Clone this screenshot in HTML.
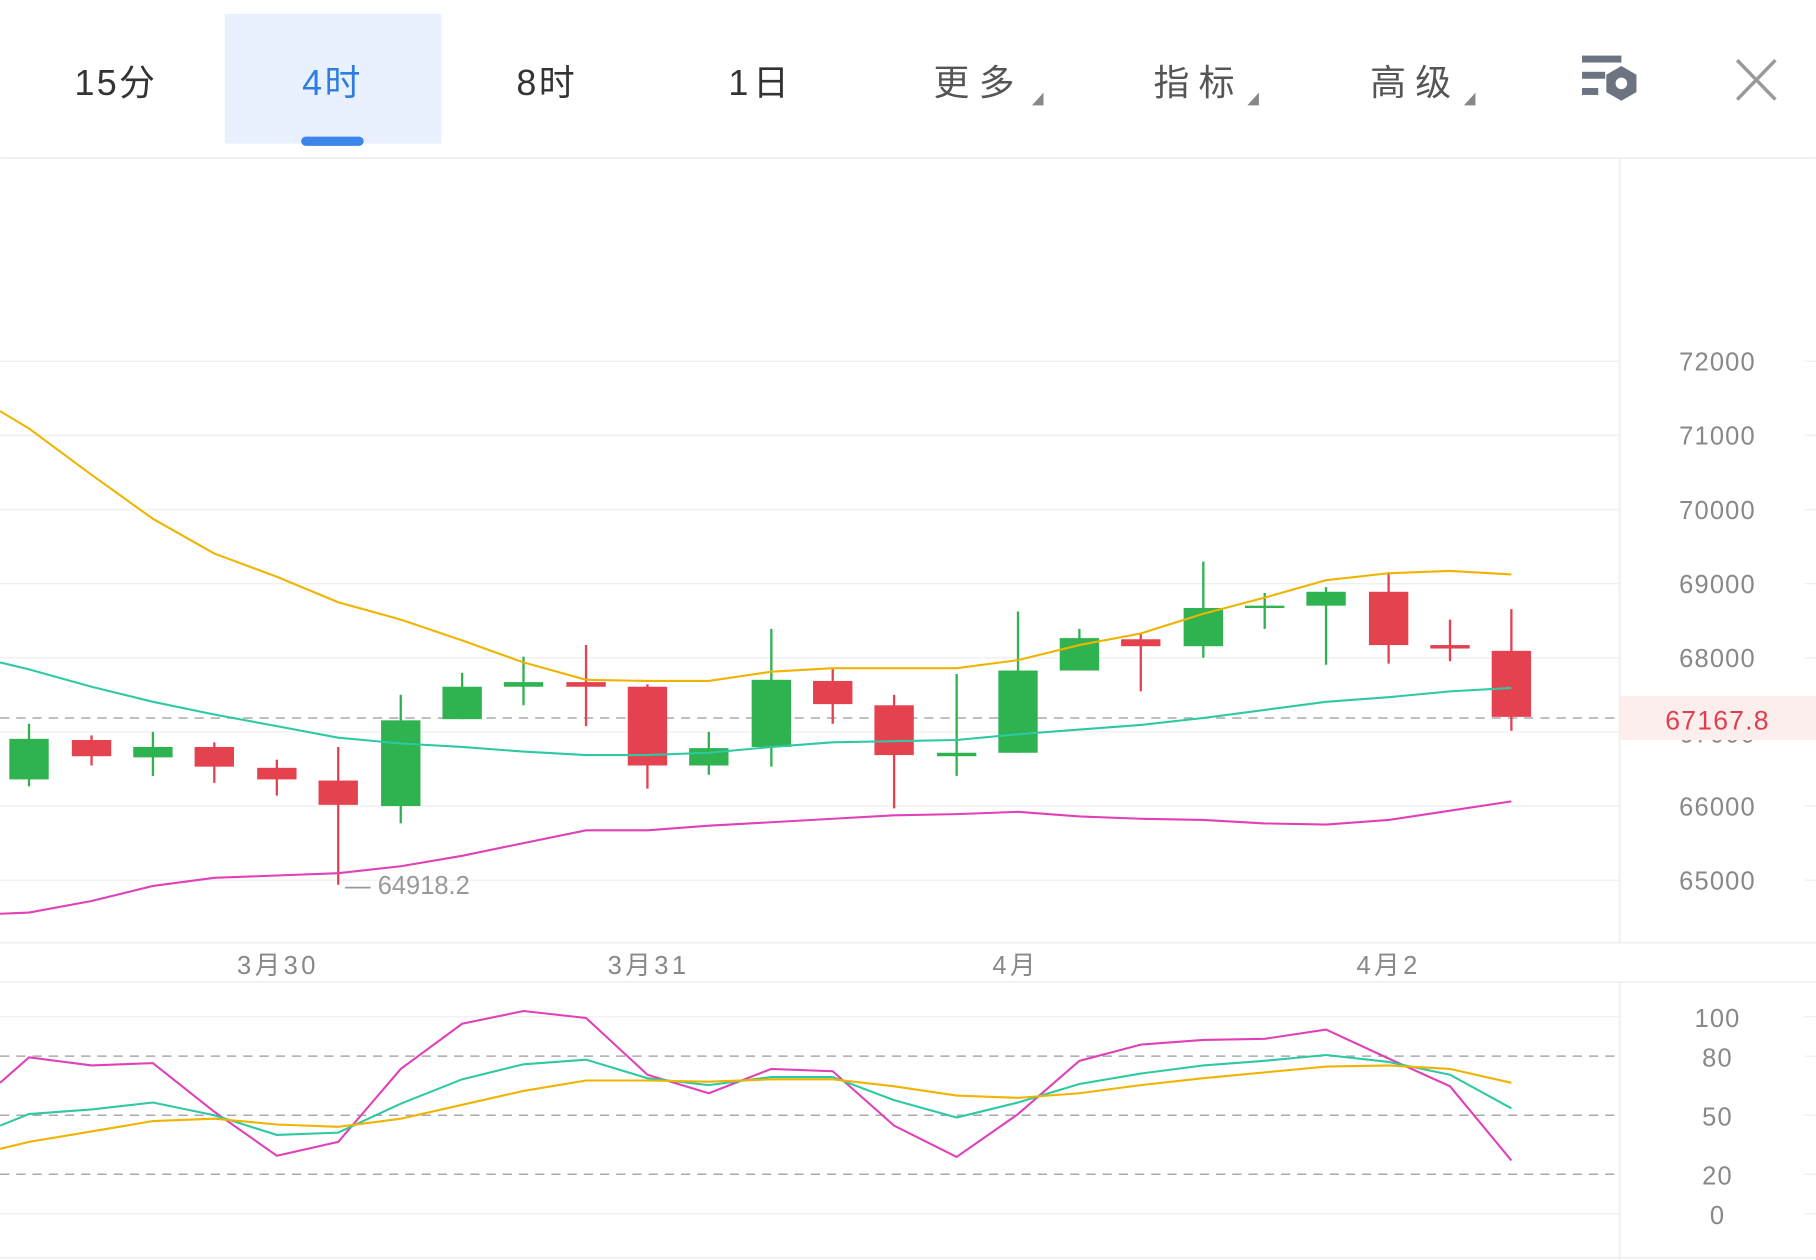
<!DOCTYPE html>
<html><head><meta charset="utf-8"><style>
html,body{margin:0;padding:0;background:#fff;}
svg{display:block;}
text{font-family:"Liberation Sans","Noto Sans CJK SC",sans-serif;}
</style></head><body>
<svg width="1816" height="1260" viewBox="0 0 1568 1088" xmlns="http://www.w3.org/2000/svg">
<rect width="1568" height="1088" fill="#fff"/>
<rect x="194" y="12" width="187" height="112" fill="#e8f1fd"/>
<rect x="260" y="118" width="54" height="8" rx="4" fill="#3b86e8"/>
<line x1="0" y1="136.5" x2="1568" y2="136.5" stroke="#eeeeee" stroke-width="1.5"/>
<g font-size="31" text-anchor="middle" fill="#333">
<text x="100" y="82" letter-spacing="2">15分</text>
<text x="287" y="82" fill="#2f7de1" letter-spacing="2">4时</text>
<text x="472" y="82" letter-spacing="2">8时</text>
<text x="657" y="82" letter-spacing="4">1日</text>
<text x="845" y="82" fill="#555" letter-spacing="8">更多</text>
<text x="1035" y="82" fill="#555" letter-spacing="8">指标</text>
<text x="1222" y="82" fill="#555" letter-spacing="8">高级</text>
</g>
<g fill="#888">
<polygon points="891,91 901,91 901,80"/>
<polygon points="1077,91 1087,91 1087,80"/>
<polygon points="1264,91 1274,91 1274,80"/>
</g>
<g fill="#6b7480">
<rect x="1366" y="48" width="34" height="6"/>
<rect x="1366" y="62" width="20" height="6"/>
<rect x="1366" y="76" width="14" height="6"/>
<polygon points="1400,57 1413,64.5 1413,79.5 1400,87 1387,79.5 1387,64.5"/>
<circle cx="1400" cy="72" r="5" fill="#fff"/>
</g>
<g stroke="#999" stroke-width="3">
<line x1="1500" y1="52" x2="1533" y2="86"/><line x1="1533" y1="52" x2="1500" y2="86"/>
</g>
<g stroke="#f0f0f0" stroke-width="1.2">
<line x1="0" y1="312" x2="1398" y2="312"/><line x1="0" y1="376" x2="1398" y2="376"/>
<line x1="0" y1="440" x2="1398" y2="440"/><line x1="0" y1="504" x2="1398" y2="504"/>
<line x1="0" y1="568" x2="1398" y2="568"/><line x1="0" y1="632" x2="1398" y2="632"/>
<line x1="0" y1="696" x2="1398" y2="696"/><line x1="0" y1="760" x2="1398" y2="760"/>
<line x1="1558" y1="312" x2="1568" y2="312"/><line x1="1558" y1="376" x2="1568" y2="376"/>
<line x1="1558" y1="440" x2="1568" y2="440"/><line x1="1558" y1="504" x2="1568" y2="504"/>
<line x1="1558" y1="568" x2="1568" y2="568"/><line x1="1558" y1="696" x2="1568" y2="696"/>
<line x1="1558" y1="760" x2="1568" y2="760"/>
<line x1="0" y1="878" x2="1398" y2="878"/><line x1="0" y1="1048" x2="1398" y2="1048"/>
<line x1="1558" y1="878" x2="1568" y2="878"/><line x1="1558" y1="912" x2="1568" y2="912"/>
<line x1="1558" y1="963" x2="1568" y2="963"/><line x1="1558" y1="1014" x2="1568" y2="1014"/>
<line x1="1558" y1="1048" x2="1568" y2="1048"/>
</g>
<g stroke="#eeeeee" stroke-width="1.5">
<line x1="1398.5" y1="137" x2="1398.5" y2="814"/>
<line x1="1398.5" y1="848" x2="1398.5" y2="1088"/>
<line x1="0" y1="814" x2="1568" y2="814"/>
<line x1="0" y1="848" x2="1568" y2="848"/>
<line x1="0" y1="1086" x2="1568" y2="1086"/>
</g>
<g font-size="22" fill="#888" text-anchor="middle" letter-spacing="1">
<text x="1483" y="320">72000</text><text x="1483" y="384">71000</text>
<text x="1483" y="448">70000</text><text x="1483" y="512">69000</text>
<text x="1483" y="576">68000</text><text x="1483" y="641">67000</text><text x="1483" y="704">66000</text>
<text x="1483" y="768">65000</text>
<text x="1483" y="887">100</text><text x="1483" y="921">80</text>
<text x="1483" y="972">50</text><text x="1483" y="1023">20</text>
<text x="1483" y="1057">0</text>
<text x="240" y="841" letter-spacing="3">3月30</text>
<text x="560" y="841" letter-spacing="3">3月31</text>
<text x="877" y="841" letter-spacing="3">4月</text>
<text x="1199" y="841" letter-spacing="3">4月2</text>
</g>
<rect x="1399" y="601" width="169" height="38" fill="#fdeeee"/>
<text x="1483" y="630" font-size="23" fill="#e03e4e" text-anchor="middle" letter-spacing="1">67167.8</text>
<text x="298" y="772" font-size="22" fill="#999">— 64918.2</text>
<g stroke="#aaa" stroke-width="1.3" stroke-dasharray="8,6">
<line x1="0" y1="620" x2="1398" y2="620"/>
<line x1="0" y1="912" x2="1398" y2="912"/>
<line x1="0" y1="963" x2="1398" y2="963"/>
<line x1="0" y1="1014" x2="1398" y2="1014"/>
</g>
<g fill="#2fb350" stroke="#2fb350" stroke-width="2">
<line x1="25" y1="625" x2="25" y2="679"/><rect x="8" y="638" width="34" height="35" stroke="none"/>
<line x1="132" y1="632" x2="132" y2="670"/><rect x="115" y="645" width="34" height="9" stroke="none"/>
<line x1="346" y1="600" x2="346" y2="711"/><rect x="329" y="622" width="34" height="74" stroke="none"/>
<line x1="399" y1="581" x2="399" y2="621"/><rect x="382" y="593" width="34" height="28" stroke="none"/>
<line x1="452" y1="567" x2="452" y2="609"/><rect x="435" y="589" width="34" height="4" stroke="none"/>
<line x1="612" y1="632" x2="612" y2="669"/><rect x="595" y="646" width="34" height="15" stroke="none"/>
<line x1="666" y1="543" x2="666" y2="662"/><rect x="649" y="587" width="34" height="58" stroke="none"/>
<line x1="826" y1="582" x2="826" y2="670"/><rect x="809" y="650" width="34" height="3" stroke="none"/>
<line x1="879" y1="528" x2="879" y2="650"/><rect x="862" y="579" width="34" height="71" stroke="none"/>
<line x1="932" y1="543" x2="932" y2="579"/><rect x="915" y="551" width="34" height="28" stroke="none"/>
<line x1="1039" y1="485" x2="1039" y2="568"/><rect x="1022" y="525" width="34" height="33" stroke="none"/>
<line x1="1092" y1="512" x2="1092" y2="543"/><rect x="1075" y="523" width="34" height="2" stroke="none"/>
<line x1="1145" y1="507" x2="1145" y2="574"/><rect x="1128" y="511" width="34" height="12" stroke="none"/>
</g>
<g fill="#e5424f" stroke="#e5424f" stroke-width="2">
<line x1="79" y1="635" x2="79" y2="661"/><rect x="62" y="639" width="34" height="14" stroke="none"/>
<line x1="185" y1="641" x2="185" y2="676"/><rect x="168" y="645" width="34" height="17" stroke="none"/>
<line x1="239" y1="656" x2="239" y2="687"/><rect x="222" y="663" width="34" height="10" stroke="none"/>
<line x1="292" y1="645" x2="292" y2="764"/><rect x="275" y="674" width="34" height="21" stroke="none"/>
<line x1="506" y1="557" x2="506" y2="627"/><rect x="489" y="589" width="34" height="4" stroke="none"/>
<line x1="559" y1="591" x2="559" y2="681"/><rect x="542" y="593" width="34" height="68" stroke="none"/>
<line x1="719" y1="577" x2="719" y2="625"/><rect x="702" y="588" width="34" height="20" stroke="none"/>
<line x1="772" y1="600" x2="772" y2="698"/><rect x="755" y="609" width="34" height="43" stroke="none"/>
<line x1="985" y1="547" x2="985" y2="597"/><rect x="968" y="552" width="34" height="6" stroke="none"/>
<line x1="1199" y1="494" x2="1199" y2="573"/><rect x="1182" y="511" width="34" height="46" stroke="none"/>
<line x1="1252" y1="535" x2="1252" y2="571"/><rect x="1235" y="557" width="34" height="3" stroke="none"/>
<line x1="1305" y1="526" x2="1305" y2="631"/><rect x="1288" y="562" width="34" height="57" stroke="none"/>
</g>
<g fill="none" stroke-width="1.8">
<polyline stroke="#f0b400" points="0,355 25,370 79,410 132,448 185,478 239,498 292,520 346,535 399,553 452,572 506,587 559,588 612,588 666,580 719,577 772,577 826,577 879,570 932,557 985,547 1039,530 1092,516 1145,501 1199,495 1252,493 1305,496"/>
<polyline stroke="#2ec9a4" points="0,572 25,578 79,593 132,606 185,617 239,627 292,637 346,642 399,645 452,649 506,652 559,652 612,650 666,645 719,641 772,640 826,639 879,634 932,630 985,626 1039,620 1092,613 1145,606 1199,602 1252,597 1305,594"/>
<polyline stroke="#e040b8" points="0,789 25,788 79,778 132,765 185,758 239,756 292,754 346,748 399,739 452,728 506,717 559,717 612,713 666,710 719,707 772,704 826,703 879,701 932,705 985,707 1039,708 1092,711 1145,712 1199,708 1252,700 1305,692"/>
<polyline stroke="#e040b8" points="0,935 25,913 79,920 132,918 185,960 239,998 292,986 346,923 399,884 452,873 506,879 559,928 612,944 666,923 719,925 772,972 826,999 879,962 932,916 985,902 1039,898 1092,897 1145,889 1199,914 1252,938 1305,1002"/>
<polyline stroke="#2ec9a4" points="0,972 25,962 79,958 132,952 185,963 239,980 292,978 346,953 399,932 452,919 506,915 559,931 612,937 666,930 719,930 772,950 826,965 879,952 932,936 985,927 1039,920 1092,916 1145,911 1199,917 1252,928 1305,957"/>
<polyline stroke="#f0b400" points="0,992 25,986 79,977 132,968 185,966 239,971 292,973 346,966 399,954 452,942 506,933 559,933 612,934 666,932 719,932 772,938 826,946 879,948 932,944 985,937 1039,931 1092,926 1145,921 1199,920 1252,923 1305,935"/>
</g>
</svg>
</body></html>
